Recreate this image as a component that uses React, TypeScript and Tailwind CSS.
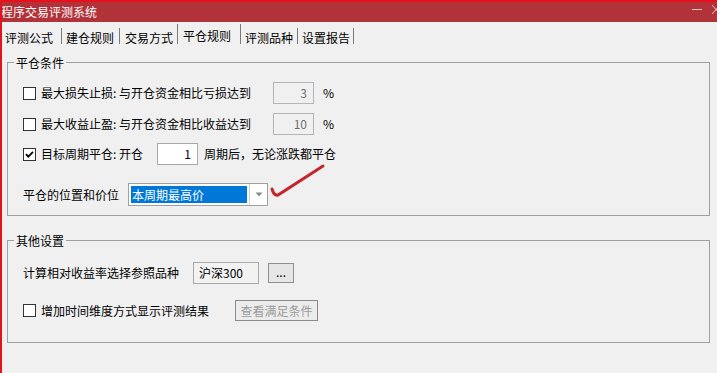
import React from "react";

function Box({ checked }: { checked?: boolean }) {
  return (
    <div className="w-[13px] h-[13px] shrink-0 border border-[#333333] bg-white flex items-center justify-center">
      {checked && (
        <svg width="11" height="11" viewBox="0 0 11 11">
          <path d="M2 5.2 L4.3 7.6 L9 2.8" fill="none" stroke="#000" strokeWidth="1.8" />
        </svg>
      )}
    </div>
  );
}

function Sep({ tall }: { tall?: boolean }) {
  return <div className={`w-px bg-[#7a7a7a] ${tall ? "h-[20px] self-start mt-[2px]" : "h-[16px] mt-[6px] self-start"}`} />;
}

export default function App() {
  return (
    <div className="w-[717px] h-[373px] overflow-hidden bg-[#f0f0f0] text-[12px] leading-none text-black font-['Noto_Sans_CJK_SC','Microsoft_YaHei',sans-serif] border-l-2 border-[#e0141c]">
      <div className="h-[2px] bg-[#e8111b]" />
      <div className="h-[20px] bg-[#b13238] flex items-center justify-between text-white">
        <span className="text-[12px] -ml-[1px]">程序交易评测系统</span>
        <svg width="30" height="20" viewBox="0 0 30 20" className="shrink-0 -mr-[2px]">
          <line x1="3" y1="7.5" x2="13" y2="7.5" stroke="#f2c2c4" strokeWidth="1" />
          <line x1="23" y1="3" x2="31" y2="12" stroke="#f2c2c4" strokeWidth="1" />
          <line x1="31" y1="3" x2="23" y2="12" stroke="#f2c2c4" strokeWidth="1" />
        </svg>
      </div>

      <div className="h-[25px] flex items-start">
        <div className="pl-[3px] pr-[8px] pt-[10px]">评测公式</div>
        <Sep />
        <div className="pl-[4px] pr-[5px] pt-[10px]">建仓规则</div>
        <Sep />
        <div className="pl-[5px] pr-[4px] pt-[10px]">交易方式</div>
        <Sep tall />
        <div className="pl-[5px] pr-[9px] pt-[8px]">平仓规则</div>
        <Sep tall />
        <div className="pl-[4px] pr-[4px] pt-[10px]">评测品种</div>
        <Sep />
        <div className="pl-[4px] pr-[3px] pt-[10px]">设置报告</div>
        <Sep />
      </div>

      <div className="pl-[5px] flex flex-col">
        {/* 平仓条件 */}
        <div className="relative mt-[15px] w-[703px] h-[154px] border border-[#a0a0a0]">
          <span className="absolute -top-[8px] left-[6px] px-[2px] bg-[#f0f0f0] leading-[15px]">平仓条件</span>
          <div className="pt-[19px] pl-[15px] flex flex-col">
            <div className="h-[22px] flex items-center">
              <Box />
              <span className="ml-[5px] w-[232px]">最大损失止损: 与开仓资金相比亏损达到</span>
              <div className="w-[41px] h-[22px] border border-[#b5b5b5] bg-[#f0f0f0] flex items-center justify-end pr-[6px] text-[#6d6d6d]">3</div>
              <span className="ml-[9px]">%</span>
            </div>
            <div className="h-[22px] mt-[9px] flex items-center">
              <Box />
              <span className="ml-[5px] w-[232px]">最大收益止盈: 与开仓资金相比收益达到</span>
              <div className="w-[41px] h-[22px] border border-[#b5b5b5] bg-[#f0f0f0] flex items-center justify-end pr-[6px] text-[#6d6d6d]">10</div>
              <span className="ml-[9px]">%</span>
            </div>
            <div className="h-[22px] mt-[8px] flex items-center">
              <Box checked />
              <span className="ml-[5px] w-[116px]">目标周期平仓: 开仓</span>
              <div className="w-[41px] h-[22px] border border-[#a8a8a8] bg-white flex items-center justify-end pr-[6px]">1</div>
              <span className="ml-[6px]">周期后，无论涨跌都平仓</span>
            </div>
            <div className="relative h-[23px] mt-[18px] flex items-center">
              <span className="w-[105px]">平仓的位置和价位</span>
              <div className="w-[140px] h-[23px] border border-[#a0a0a0] bg-white flex items-stretch">
                <div className="flex-1 m-[2px] bg-[#0078d7] text-white flex items-center pl-[1px]">本周期最高价</div>
                <div className="w-[18px] border-l border-[#d0d0d0] flex items-center justify-center">
                  <svg width="8" height="5" viewBox="0 0 8 5">
                    <path d="M0.5 0.5 L7.5 0.5 L4 4.5 Z" fill="#8a8a8a" />
                  </svg>
                </div>
              </div>
              <svg width="60" height="40" viewBox="0 0 60 40" className="absolute left-[247px] -top-[20px]">
                <path d="M2 26 Q4 33 8 32 L53 3" fill="none" stroke="#c1272d" strokeWidth="3" strokeLinecap="round" />
              </svg>
            </div>
          </div>
        </div>

        {/* 其他设置 */}
        <div className="relative mt-[24px] w-[703px] h-[103px] border border-[#a0a0a0]">
          <span className="absolute -top-[8px] left-[6px] px-[2px] bg-[#f0f0f0] leading-[15px]">其他设置</span>
          <div className="pt-[21px] pl-[15px] flex flex-col">
            <div className="h-[22px] flex items-center">
              <span className="w-[170px]">计算相对收益率选择参照品种</span>
              <div className="w-[66px] h-[22px] border border-[#a8a8a8] bg-[#f2f2f2] flex items-center pl-[5px]">沪深300</div>
              <div className="ml-[9px] w-[26px] h-[20px] border border-[#8f8f8f] bg-[#e6e6e6] flex items-center justify-center pb-[2px]">...</div>
            </div>
            <div className="h-[21px] mt-[16px] flex items-center">
              <Box />
              <span className="ml-[5px] w-[194px]">增加时间维度方式显示评测结果</span>
              <div className="w-[83px] h-[21px] border border-[#8a8a8a] bg-[#ececec] flex items-center justify-center text-[#9a9a9a]">查看满足条件</div>
            </div>
          </div>
        </div>
      </div>
    </div>
  );
}
